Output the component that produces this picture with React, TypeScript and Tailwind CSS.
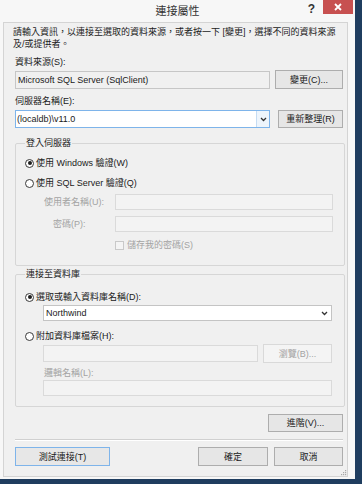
import React from "react";

function Btn({
  children,
  className = "",
  disabled = false,
  focused = false,
}: {
  children: React.ReactNode;
  className?: string;
  disabled?: boolean;
  focused?: boolean;
}) {
  const tone = disabled
    ? "bg-[#f4f4f4] border-[#d9d9d9] text-[#a3a3a3]"
    : focused
    ? "bg-[#e7e7e7] border-[#7eb4ea] text-[#1a1a1a]"
    : "bg-[#e6e6e6] border-[#adadad] text-[#1a1a1a]";
  return (
    <div className={`flex items-center justify-center border shrink-0 ${tone} ${className}`}>
      {children}
    </div>
  );
}

function Radio({ checked }: { checked?: boolean }) {
  return (
    <span className="w-[9px] h-[9px] rounded-full border border-[#3a3a3a] bg-white flex items-center justify-center shrink-0">
      {checked && <span className="w-[4px] h-[4px] rounded-full bg-[#1e1e1e]" />}
    </span>
  );
}

function Chevron() {
  return (
    <svg width="7" height="5" viewBox="0 0 7 5">
      <path d="M1 1 L3.5 3.5 L6 1" fill="none" stroke="#333" strokeWidth="1.3" />
    </svg>
  );
}

function DisabledBox({ className = "" }: { className?: string }) {
  return <div className={`border border-[#dadada] bg-[#f3f3f3] shrink-0 ${className}`} />;
}

export default function App() {
  return (
    <div className="w-[362px] h-[484px] bg-[#1f3d5f] overflow-hidden font-['Liberation_Sans','Noto_Sans_CJK_TC',sans-serif] text-[9px] leading-[12px] text-[#1a1a1a]">
      <div className="w-[355px] h-[479px] bg-[#f7f7f7] flex flex-col">
        {/* Title bar */}
        <div className="h-[22px] grid grid-cols-[1fr_auto_1fr] shrink-0">
          <div />
          <div className="text-[11px] leading-[22px] text-[#333]">連接屬性</div>
          <div className="flex justify-end items-start">
            <div className="mt-[3px] text-[12px] leading-[12px] font-bold text-[#333]">?</div>
            <div className="ml-[8px] mr-[2px] w-[30px] h-[14px] bg-[#c75050] flex items-center justify-center">
              <svg width="8" height="8" viewBox="0 0 8 8">
                <path d="M1 1 L7 7 M7 1 L1 7" stroke="#fff" strokeWidth="1.8" />
              </svg>
            </div>
          </div>
        </div>

        {/* Client area */}
        <div className="relative ml-[3px] w-[345px] h-[455px] border border-[#d4d4d4] bg-[#f0f0f0] flex flex-col pl-[11px] pr-[3px]">
          <div className="mt-[3px] ml-[-2px]">
            <div className="whitespace-nowrap">請輸入資訊，以連接至選取的資料來源，或者按一下 [變更]，選擇不同的資料來源</div>
            <div className="whitespace-nowrap">及/或提供者。</div>
          </div>

          <div className="mt-[6px] h-[12px]">資料來源(S):</div>
          <div className="mt-[2px] flex items-center w-[328px] h-[19px] gap-[5px]">
            <div className="w-[255px] h-[18px] border border-[#c6c6c6] bg-[#f0f0f0] pl-[2px] flex items-center shrink-0">
              Microsoft SQL Server (SqlClient)
            </div>
            <Btn className="w-[68px] h-[19px]">變更(C)...</Btn>
          </div>

          <div className="mt-[6px] h-[12px]">伺服器名稱(E):</div>
          <div className="mt-[3px] flex items-center w-[328px] h-[18px] gap-[8px]">
            <div className="w-[255px] h-[18px] border border-[#7eb4ea] bg-white flex shrink-0">
              <div className="flex-1 pl-[1px] flex items-center">{"(localdb)\\v11.0"}</div>
              <div className="w-[13px] border-l border-[#c5dcf3] bg-[#eef5fc] flex items-center justify-center">
                <Chevron />
              </div>
            </div>
            <Btn className="w-[65px] h-[18px]">重新整理(R)</Btn>
          </div>

          {/* Group 1 */}
          <fieldset className="mt-[9px] w-[330px] border border-[#d6d6d6] rounded-[2px] pb-[14px] flex flex-col">
            <legend className="ml-[9px] px-[1px] leading-[12px]">登入伺服器</legend>
            <div className="mt-[8px] h-[12px] pl-[9px] flex items-center gap-[2px]">
              <Radio checked />
              <span>使用 Windows 驗證(W)</span>
            </div>
            <div className="mt-[8px] h-[12px] pl-[9px] flex items-center gap-[2px]">
              <Radio />
              <span>使用 SQL Server 驗證(Q)</span>
            </div>
            <div className="mt-[5px] h-[16px] flex items-center">
              <div className="w-[99px] pl-[28px] text-[#a3a3a3] shrink-0">使用者名稱(U):</div>
              <DisabledBox className="w-[218px] h-[16px]" />
            </div>
            <div className="mt-[6px] h-[16px] flex items-center">
              <div className="w-[99px] pl-[37px] text-[#a3a3a3] shrink-0">密碼(P):</div>
              <DisabledBox className="w-[218px] h-[16px]" />
            </div>
            <div className="mt-[7px] h-[12px] pl-[99px] flex items-center gap-[3px]">
              <span className="w-[9px] h-[9px] border border-[#c9c9c9] bg-[#f4f4f4] shrink-0" />
              <span className="text-[#a3a3a3]">儲存我的密碼(S)</span>
            </div>
          </fieldset>

          {/* Group 2 */}
          <fieldset className="mt-[2px] w-[330px] border border-[#d6d6d6] rounded-[2px] pb-[10px] flex flex-col">
            <legend className="ml-[9px] px-[1px] leading-[12px]">連接至資料庫</legend>
            <div className="mt-[11px] h-[12px] pl-[9px] flex items-center gap-[2px]">
              <Radio checked />
              <span>選取或輸入資料庫名稱(D):</span>
            </div>
            <div className="mt-[2px] ml-[27px] w-[289px] h-[16px] border border-[#c4c4c4] bg-white flex">
              <div className="flex-1 pl-[2px] flex items-center">Northwind</div>
              <div className="w-[13px] flex items-center justify-center">
                <Chevron />
              </div>
            </div>
            <div className="mt-[9px] h-[12px] pl-[9px] flex items-center gap-[2px]">
              <Radio />
              <span>附加資料庫檔案(H):</span>
            </div>
            <div className="mt-[2px] ml-[27px] h-[19px] flex items-center gap-[5px]">
              <DisabledBox className="w-[215px] h-[17px]" />
              <Btn disabled className="w-[69px] h-[19px]">瀏覽(B)...</Btn>
            </div>
            <div className="mt-[4px] h-[12px] pl-[28px] text-[#a3a3a3]">邏輯名稱(L):</div>
            <DisabledBox className="mt-[1px] ml-[27px] w-[289px] h-[16px]" />
          </fieldset>

          <div className="mt-[7px] w-[328px] flex justify-end">
            <Btn className="w-[75px] h-[18px]">進階(V)...</Btn>
          </div>

          <div className="mt-[7px] w-[328px] h-[2px] border-t border-b border-t-[#d0d0d0] border-b-white" />

          <div className="mt-[6px] w-[328px] h-[19px] flex items-center">
            <Btn focused className="w-[95px] h-[19px]">測試連接(T)</Btn>
            <div className="flex-1" />
            <Btn className="w-[70px] h-[19px]">確定</Btn>
            <Btn className="ml-[6px] w-[69px] h-[19px]">取消</Btn>
          </div>

          <svg className="absolute right-0 bottom-0" width="6" height="6" viewBox="0 0 6 6">
            <rect x="4" y="0" width="1.2" height="1.2" fill="#a8a8a8" />
            <rect x="2" y="2" width="1.2" height="1.2" fill="#a8a8a8" />
            <rect x="4" y="2" width="1.2" height="1.2" fill="#a8a8a8" />
            <rect x="0" y="4" width="1.2" height="1.2" fill="#a8a8a8" />
            <rect x="2" y="4" width="1.2" height="1.2" fill="#a8a8a8" />
            <rect x="4" y="4" width="1.2" height="1.2" fill="#a8a8a8" />
          </svg>
        </div>
      </div>
    </div>
  );
}
